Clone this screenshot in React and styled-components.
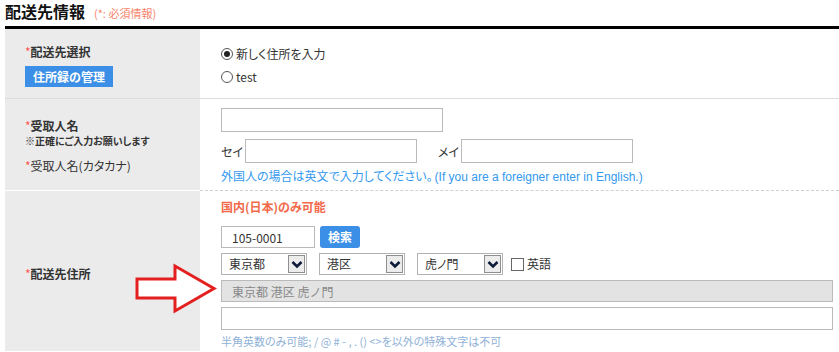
import React from 'react'
import styled, { createGlobalStyle } from 'styled-components'

const GlobalStyle = createGlobalStyle`
  body{
    margin:0;
    background:#fff;
    color:#333;
    font-family:"Noto Sans CJK JP","Liberation Sans",sans-serif;
    font-feature-settings:"palt";
  }
  *{ box-sizing:border-box; }
`

const Page = styled.div`
  padding-left:5px;
  width:839px;
`

const Header = styled.div`
  display:flex;
  align-items:baseline;
  gap:9px;
  height:27px;
  padding-top:2px;
  border-bottom:3px solid #000;
  box-sizing:content-box;
  margin-top:-3px;
`

const Title = styled.h2`
  margin:0;
  font-size:16px;
  font-weight:bold;
  color:#111;
  line-height:24px;
`

const Note = styled.span`
  font-size:11px;
  color:#f7836a;
`

const Row = styled.div`
  position:relative;
  display:grid;
  grid-template-columns:195px 1fr;
  min-height:${p => p.h}px;
  border-bottom:${p => p.line || 'none'};
`

const Head = styled.div`
  background:#ebebeb;
  padding:${p => p.pt}px 0 0 20px;
  display:flex;
  flex-direction:column;
  align-items:flex-start;
  border-bottom:${p => p.line || 'none'};
`

const Cell = styled.div`
  padding:${p => p.pt}px 6px 0 21px;
  display:flex;
  flex-direction:column;
  align-items:flex-start;
  border-bottom:${p => p.line || 'none'};
`

const Label = styled.div`
  font-size:12px;
  line-height:16px;
  font-weight:${p => (p.bold ? 'bold' : 'normal')};
  margin-top:${p => p.mt || 0}px;
  color:#333;
  span{ color:#f55; font-weight:normal; }
`

const SubLabel = styled.div`
  font-size:10px;
  line-height:14px;
  font-weight:bold;
  color:#333;
`

const BlueButton = styled.button`
  border:none;
  background:#3b8fe6;
  color:#fff;
  font-family:inherit;
  font-weight:bold;
  font-size:12px;
  height:${p => p.h || 21}px;
  padding:0 ${p => p.px || 8}px;
  margin-top:${p => p.mt || 0}px;
  border-radius:${p => p.r || 0}px;
  line-height:1;
`

const Choice = styled.label`
  display:flex;
  align-items:center;
  gap:3px;
  font-size:12px;
  line-height:18px;
  margin-top:${p => p.mt || 0}px;
  color:#333;
`

const RadioDot = styled.span`
  width:12px;
  height:12px;
  border-radius:50%;
  border:1px solid #555;
  background:#fff;
  display:flex;
  align-items:center;
  justify-content:center;
  &::after{
    content:'';
    width:6px;
    height:6px;
    border-radius:50%;
    background:${p => (p.on ? '#222' : 'transparent')};
  }
`

const Box = styled.span`
  width:13px;
  height:13px;
  border:1px solid #666;
  background:#fff;
`

const Field = styled.input`
  display:block;
  width:${p => p.w || '100%'};
  height:${p => p.h || 24}px;
  border:1px solid #bababa;
  background:${p => (p.gray ? '#e3e3e3' : '#fff')};
  color:${p => (p.gray ? '#888' : '#333')};
  font-family:inherit;
  font-size:12px;
  padding:0 10px;
  margin-top:${p => p.mt || 0}px;
  outline:none;
`

const Line = styled.div`
  display:flex;
  align-items:center;
  width:100%;
  gap:${p => p.gap || 0}px;
  margin-top:${p => p.mt || 0}px;
`

const Small = styled.span`
  font-size:12px;
  color:#333;
  margin-left:${p => p.ml || 0}px;
  margin-right:${p => p.mr || 0}px;
`

const Help = styled.div`
  font-size:12px;
  line-height:16px;
  color:#3399ee;
  margin-top:5px;
  em{ font-style:normal; font-family:"Liberation Sans",sans-serif; margin-left:2px; }
`

const Warn = styled.div`
  font-size:12px;
  line-height:16px;
  font-weight:bold;
  color:#f26a4b;
`

const Hint = styled.div`
  font-size:11px;
  line-height:14px;
  color:#8fb1d6;
  margin-top:4px;
`

const SelectBox = styled.div`
  width:86px;
  height:22px;
  border:1px solid #b3b3b3;
  display:flex;
  align-items:stretch;
  justify-content:space-between;
  background:#fff;
  font-size:12px;
  color:#333;
  margin-right:${p => p.mr || 0}px;
`

const SelectText = styled.span`
  padding-left:7px;
  line-height:20px;
`

const SelectBtn = styled.span`
  width:17px;
  margin:1px;
  border:1px solid #8f8f8f;
  background:#ececec;
  display:flex;
  align-items:center;
  justify-content:center;
`

const Arrow = styled.svg`
  position:absolute;
  left:130px;
  top:72px;
`

function Select({ value, mr }) {
  return (
    <SelectBox mr={mr}>
      <SelectText>{value}</SelectText>
      <SelectBtn>
        <svg width="12" height="9" viewBox="0 0 12 9">
          <path d="M1.5 2 L6 6.5 L10.5 2" fill="none" stroke="#0d1a3a" strokeWidth="2.6" />
        </svg>
      </SelectBtn>
    </SelectBox>
  )
}

export default function App() {
  return (
    <Page>
      <GlobalStyle />
      <Header>
        <Title>配送先情報</Title>
        <Note>(*: 必須情報)</Note>
      </Header>

      <Row h={70} line="1px solid #dcdcdc">
        <Head pt={15}>
          <Label bold><span>*</span>配送先選択</Label>
          <BlueButton mt={6}>住所録の管理</BlueButton>
        </Head>
        <Cell pt={16}>
          <Choice><RadioDot on />新しく住所を入力</Choice>
          <Choice mt={5}><RadioDot />test</Choice>
        </Cell>
      </Row>

      <Row h={92}>
        <Head pt={19} line="1px solid #fff">
          <Label bold><span>*</span>受取人名</Label>
          <SubLabel>※正確にご入力お願いします</SubLabel>
          <Label mt={10}><span>*</span>受取人名(カタカナ)</Label>
        </Head>
        <Cell pt={9} line="1px dashed #d0d0d0">
          <Field w="222px" />
          <Line mt={7}>
            <Small mr={2}>セイ</Small>
            <Field w="172px" />
            <Small ml={21} mr={2}>メイ</Small>
            <Field w="172px" />
          </Line>
          <Help>外国人の場合は英文で入力してください。<em>(If you are a foreigner enter in English.)</em></Help>
        </Cell>
      </Row>

      <Row h={160}>
        <Head pt={75}>
          <Label bold><span>*</span>配送先住所</Label>
        </Head>
        <Cell pt={8}>
          <Warn>国内(日本)のみ可能</Warn>
          <Line mt={11} gap={5}>
            <Field w="94px" h={22} defaultValue="105-0001" />
            <BlueButton h={22} px={8} r={3}>検索</BlueButton>
          </Line>
          <Line mt={5}>
            <Select value="東京都" mr={12} />
            <Select value="港区" mr={12} />
            <Select value="虎ノ門" mr={8} />
            <Choice><Box />英語</Choice>
          </Line>
          <Field gray h={22} mt={5} defaultValue="東京都 港区 虎ノ門" readOnly />
          <Field h={23} mt={5} />
          <Hint>半角英数のみ可能; / @ # - , . () &lt;&gt;を以外の特殊文字は不可</Hint>
        </Cell>
        <Arrow width="84" height="54" viewBox="0 0 84 54">
          <polygon
            points="2,16 40,16 40,3 79,25.5 40,48 40,35 2,35"
            fill="#fff"
            stroke="#e3201f"
            strokeWidth="3"
          />
        </Arrow>
      </Row>
    </Page>
  )
}
